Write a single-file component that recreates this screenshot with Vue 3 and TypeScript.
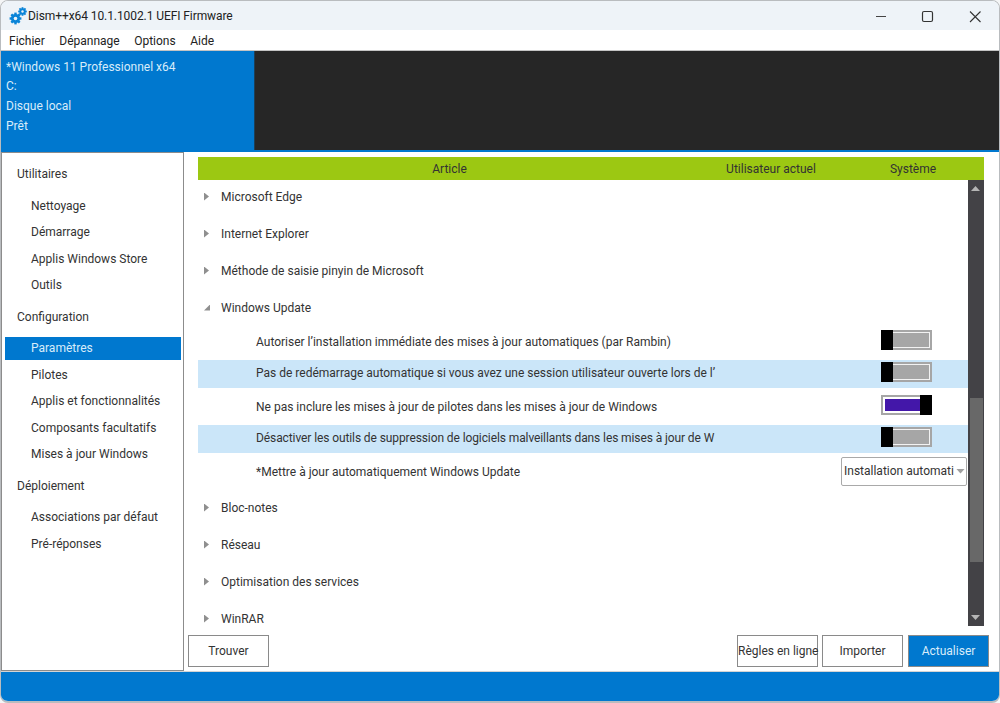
<script setup lang="ts">
const menus: string[] = ['Fichier', 'Dépannage', 'Options', 'Aide']
const info: string[] = ['*Windows 11 Professionnel x64', 'C:', 'Disque local', 'Prêt']
const nav: { title: string; items: string[] }[] = [
  { title: 'Utilitaires', items: ['Nettoyage', 'Démarrage', 'Applis Windows Store', 'Outils'] },
  { title: 'Configuration', items: ['Paramètres', 'Pilotes', 'Applis et fonctionnalités', 'Composants facultatifs', 'Mises à jour Windows'] },
  { title: 'Déploiement', items: ['Associations par défaut', 'Pré-réponses'] },
]
const before: string[] = ['Microsoft Edge', 'Internet Explorer', 'Méthode de saisie pinyin de Microsoft']
const after: string[] = ['Bloc-notes', 'Réseau', 'Optimisation des services', 'WinRAR']
const settings: { label: string; on: boolean; cls: string }[] = [
  { label: 'Autoriser l’installation immédiate des mises à jour automatiques (par Rambin)', on: false, cls: 'r1' },
  { label: 'Pas de redémarrage automatique si vous avez une session utilisateur ouverte lors de l’', on: false, cls: 'band' },
  { label: 'Ne pas inclure les mises à jour de pilotes dans les mises à jour de Windows', on: true, cls: 'r3' },
  { label: 'Désactiver les outils de suppression de logiciels malveillants dans les mises à jour de W', on: false, cls: 'band tight' },
]
</script>

<template>
  <div class="window">
    <header class="titlebar">
      <svg class="logo" width="18" height="18" viewBox="0 0 18 18" aria-hidden="true">
        <g fill="#0a84d8">
          <circle cx="6.5" cy="11.5" r="4.6" />
          <rect x="5.3" y="5.6" width="2.4" height="11.8" />
          <rect x="0.6" y="10.3" width="11.8" height="2.4" />
          <rect x="5.3" y="5.6" width="2.4" height="11.8" transform="rotate(45 6.5 11.5)" />
          <rect x="5.3" y="5.6" width="2.4" height="11.8" transform="rotate(-45 6.5 11.5)" />
          <circle cx="13.5" cy="4.5" r="3.2" />
          <rect x="12.6" y="0.2" width="1.8" height="8.6" />
          <rect x="9.2" y="3.6" width="8.6" height="1.8" />
          <rect x="12.6" y="0.2" width="1.8" height="8.6" transform="rotate(45 13.5 4.5)" />
          <rect x="12.6" y="0.2" width="1.8" height="8.6" transform="rotate(-45 13.5 4.5)" />
        </g>
        <circle cx="6.5" cy="11.5" r="1.8" fill="#eef3f8" />
        <circle cx="13.5" cy="4.5" r="1.2" fill="#eef3f8" />
      </svg>
      <span class="title">Dism++x64 10.1.1002.1 UEFI Firmware</span>
      <div class="controls">
        <svg width="46" height="30" viewBox="0 0 46 30" aria-hidden="true"><path d="M16 15.5h10" stroke="#444" stroke-width="1" /></svg>
        <svg width="46" height="30" viewBox="0 0 46 30" aria-hidden="true"><rect x="16.5" y="10.5" width="10" height="10" rx="1.5" fill="none" stroke="#333" stroke-width="1.2" /></svg>
        <svg width="46" height="30" viewBox="0 0 46 30" aria-hidden="true"><path d="M18 10.5l10.5 10.5M28.5 10.5L18 21" stroke="#333" stroke-width="1.1" fill="none" /></svg>
      </div>
    </header>

    <nav class="menubar">
      <span v-for="m in menus" :key="m">{{ m }}</span>
    </nav>

    <section class="banner">
      <div class="info">
        <div v-for="line in info" :key="line">{{ line }}</div>
      </div>
      <div class="dark"></div>
    </section>

    <main class="body">
      <aside class="sidebar">
        <template v-for="group in nav" :key="group.title">
          <div class="nav-title">{{ group.title }}</div>
          <div class="nav-items">
            <div v-for="item in group.items" :key="item" class="nav-item" :class="{ active: item === 'Paramètres' }">{{ item }}</div>
          </div>
        </template>
      </aside>

      <div class="content">
        <div class="table-head">
          <span class="col-a">Article</span>
          <span class="col-b">Utilisateur actuel</span>
          <span class="col-c">Système</span>
        </div>
        <div class="list-wrap">
          <div class="list">
            <div v-for="name in before" :key="name" class="group-row">
              <i class="tri closed"></i><span>{{ name }}</span>
            </div>
            <div class="group-row">
              <i class="tri open"></i><span>Windows Update</span>
            </div>
            <div class="children">
              <div v-for="s in settings" :key="s.label" class="set-row" :class="s.cls">
                <span class="set-label">{{ s.label }}</span>
                <span class="toggle" :class="{ on: s.on }"><i class="track"></i><i class="knob"></i></span>
              </div>
              <div class="set-row select-row">
                <span class="set-label">*Mettre à jour automatiquement Windows Update</span>
                <span class="select"><span class="select-text">Installation automati</span><i class="select-arrow"></i></span>
              </div>
            </div>
            <div v-for="name in after" :key="name" class="group-row">
              <i class="tri closed"></i><span>{{ name }}</span>
            </div>
          </div>
          <div class="scrollbar">
            <i class="sb-up"></i>
            <div class="sb-track"><div class="sb-thumb"></div></div>
            <i class="sb-down"></i>
          </div>
        </div>
        <div class="actions">
          <button class="btn find">Trouver</button>
          <span class="spacer"></span>
          <button class="btn rules">Règles en ligne</button>
          <button class="btn import">Importer</button>
          <button class="btn primary">Actualiser</button>
        </div>
      </div>
    </main>

    <footer class="status"></footer>
  </div>
</template>

<style>
html, body { margin: 0; background: #f4f5f6; }
</style>

<style scoped>
* { box-sizing: border-box; }
.window {
  width: 1000px; height: 703px; display: flex; flex-direction: column;
  font-family: Roboto, "Open Sans", sans-serif; font-size: 12px; color: #333;
  background: #fff; border: 1px solid #b9bcbf; border-bottom-width: 2px; border-radius: 8px; overflow: hidden;
}
.titlebar { height: 29px; flex: none; background: #eef3f8; display: flex; align-items: center; padding-left: 8px; }
.logo { margin-right: 1px; }
.title { color: #222; flex: 1; letter-spacing: -0.08px; }
.controls { display: flex; align-items: center; height: 30px; margin-right: 1px; }
.controls svg { display: block; margin-top: 1px; }
.menubar { height: 21px; flex: none; background: #fff; display: flex; gap: 14.5px; padding: 1px 0 0 8px; align-items: center; color: #222; border-bottom: 1px solid #c4c4c4; }
.banner { height: 101px; flex: none; display: flex; border-bottom: 2px solid #0078cf; }
.info { width: 253px; background: #0078cf; color: #d8ecfa; padding: 6.5px 0 0 5px; line-height: 19.7px; }
.dark { flex: 1; background: #262626; border-left: 1px solid #1d3f57; }
.body { flex: 1; min-height: 0; display: flex; }
.sidebar { width: 183px; flex: none; border: 1px solid #8c8c8c; padding-top: 11px; background: #fff; color: #333; }
.nav-title { height: 20px; line-height: 20px; padding-left: 15px; margin-bottom: 10.5px; }
.nav-items { margin-bottom: 9.5px; }
.nav-item { height: 23px; line-height: 23px; padding-left: 26px; margin: 0 2px 3.5px 3px; width: 176px; }
.nav-item.active { background: #0078cf; color: #d8ecfa; }
.nav-items:last-child { margin-bottom: 0; }
.content { flex: 1; min-width: 0; display: flex; flex-direction: column; padding: 5px 10px 4px 4px; }
.table-head { height: 23px; flex: none; margin: 0 5px 0 10px; background: #9cc812; display: flex; align-items: center; color: #333; }
.col-a { width: 503px; text-align: center; }
.col-b { width: 140px; text-align: center; }
.col-c { width: 124px; text-align: center; padding-left: 20px; }
.list-wrap { flex: 1; min-height: 0; display: flex; margin: 0 5px 0 10px; }
.list { flex: 1; min-width: 0; overflow: hidden; margin-top: -2px; }
.group-row { height: 37px; display: flex; align-items: center; padding-left: 6px; color: #333; }
.group-row span { margin-left: 12px; }
.tri { display: block; width: 5px; height: 8px; flex: none; }
.tri.closed { background: #8f8f8f; clip-path: polygon(0 0, 100% 50%, 0 100%); }
.tri.open { width: 6px; height: 6px; background: #8f8f8f; margin-right: -1px; clip-path: polygon(100% 0, 100% 100%, 0 100%); }
.children { padding-bottom: 2px; }
.set-row { height: 33px; display: flex; align-items: center; padding-left: 58px; }
.set-row.r1 { height: 34px; padding-bottom: 3px; }
.set-row.band { background: #cbe6f9; height: 28px; padding-bottom: 2px; }
.set-row.r3 { height: 37px; }
.set-label { width: 458px; flex: none; white-space: nowrap; color: #333; }
.tight .set-label { letter-spacing: -0.1px; }
.select-row { height: 34px; }
.select-row .set-label { margin-top: 3px; }
.toggle { position: relative; margin-left: 167px; width: 51px; height: 20px; display: block; flex: none; }
.r1 .toggle, .r3 .toggle { margin-top: -3px; }
.band .toggle { margin-top: -2px; }
.track { position: absolute; inset: 0; background: #a6a6a6; border: 2px solid #a6a6a6; box-shadow: inset 0 0 0 1px #f2f2f2; }
.knob { position: absolute; left: 0; top: 0; width: 12px; height: 20px; background: #000; }
.toggle.on .track { background: #4317a9; box-shadow: inset 0 0 0 2px #fff; }
.toggle.on .knob { left: 39px; }
.select { margin-left: 127px; margin-top: 2px; width: 126px; height: 29px; border: 1px solid #a9a9a9; border-radius: 2px; background: #fff; display: flex; align-items: center; padding-left: 2px; flex: none; }
.select-text { width: 110px; white-space: nowrap; color: #333; }
.select-arrow { width: 9px; height: 5px; background: #a0a0a0; margin-left: 2px; clip-path: polygon(0 0, 100% 0, 50% 100%); }
.scrollbar { width: 16px; flex: none; background: #434246; display: flex; flex-direction: column; align-items: center; position: relative; height: 446px; }
.sb-up, .sb-down { display: block; width: 9px; height: 5px; background: #b5b5b5; position: absolute; left: 3px; }
.sb-up { top: 6px; clip-path: polygon(50% 0, 100% 100%, 0 100%); }
.sb-down { bottom: 6px; clip-path: polygon(0 0, 100% 0, 50% 100%); }
.sb-track { flex: 1; width: 100%; padding-top: 218px; display: flex; justify-content: center; }
.sb-thumb { width: 13px; height: 164px; background: #686868; }
.actions { height: 32px; flex: none; margin-top: 9px; display: flex; gap: 4px; }
.btn { height: 32px; font: inherit; color: #333; background: #fff; border: 1px solid #8a8a8a; padding: 0; white-space: nowrap; }
.find, .rules, .import, .primary { width: 81px; }
.spacer { flex: 1; }
.primary { background: #0078cf; color: #d8ecfa; margin-left: 1px; }
.status { height: 30px; flex: none; background: #0078cf; border-top: 1px solid #d4d4d4; }
</style>
